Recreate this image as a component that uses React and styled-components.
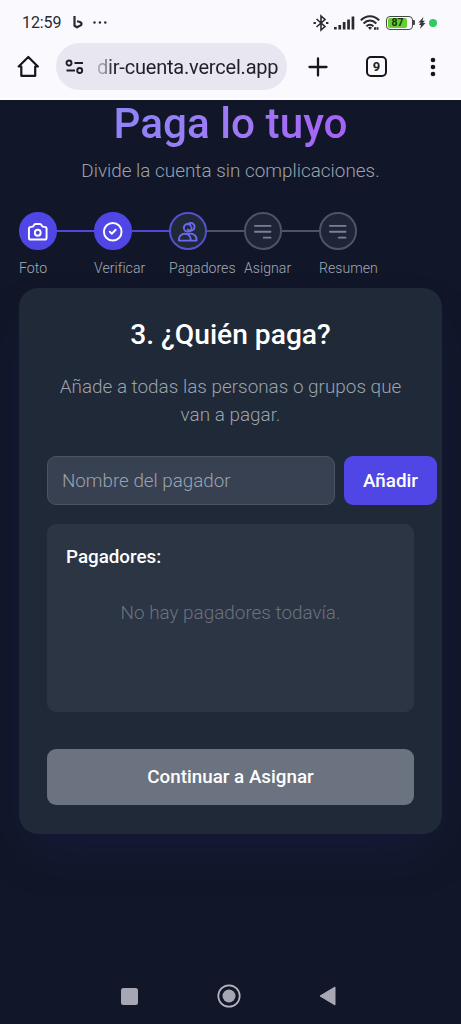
import React from "react";
import styled, { createGlobalStyle, css } from "styled-components";

const Global = createGlobalStyle`
  * { box-sizing: border-box; }
  body { margin: 0; background: #111827; font-family: Roboto, sans-serif; }
  h1, h2, h3, p { margin: 0; }
  button, input { font: inherit; }
  svg { display: block; flex: none; }
`;

const Screen = styled.div`
  width: 461px;
  height: 1024px;
  overflow: hidden;
  display: flex;
  flex-direction: column;
  background: #111728;
`;

const BrowserChrome = styled.header`
  flex: none;
  height: 100px;
  background: #faf9fe;
  border-bottom: 2px solid #fcfcfc;
  color: #1d1d22;
`;

const StatusBar = styled.div`
  height: 43px;
  padding: 2px 24px 0 22px;
  display: flex;
  align-items: center;
  justify-content: space-between;
`;

const StatusGroup = styled.div`
  display: flex;
  align-items: center;
`;

const Clock = styled.span`
  font-size: 16px;
  letter-spacing: -0.1px;
  margin-right: 12px;
  color: #2a2a2e;
`;

const Toolbar = styled.div`
  display: flex;
  align-items: center;
  height: 47px;
  padding-left: 17px;
`;

const AddressPill = styled.div`
  width: 231px;
  height: 47px;
  margin-left: 16px;
  padding-left: 9px;
  border-radius: 24px;
  background: #e8e6f1;
  display: flex;
  align-items: center;
`;

const Url = styled.span`
  margin-left: 12px;
  font-size: 20px;
  white-space: nowrap;
  letter-spacing: -0.2px;
  background: linear-gradient(90deg, #b5b4bd 0, #88878f 9px, #1f1f25 15px);
  background-clip: text;
  color: transparent;
`;

const PlusSlot = styled.div`
  margin-left: 21px;
`;

const TabCounter = styled.div`
  width: 21px;
  height: 21px;
  margin-left: 38px;
  border: 2.3px solid #17171b;
  border-radius: 5px;
  display: grid;
  place-items: center;
  font-size: 13px;
  font-weight: 700;
  line-height: 1;
`;

const MenuSlot = styled.div`
  margin-left: 43px;
`;

const Page = styled.main`
  flex: 1;
  padding: 0 19px;
  display: flex;
  flex-direction: column;
`;

const Title = styled.h1`
  align-self: center;
  font-size: 42.3px;
  font-weight: 500;
  line-height: 47px;
  white-space: nowrap;
  background: linear-gradient(90deg, #818cf8 -40%, #9f7af5 50%, #a855f7 125%);
  background-clip: text;
  color: transparent;
`;

const Subtitle = styled.p`
  margin-top: 10px;
  text-align: center;
  font-size: 18.9px;
  font-weight: 300;
  line-height: 28px;
  color: #9ca3af;
`;

const Stepper = styled.div`
  margin-top: 27.4px;
  display: flex;
`;

const Step = styled.div`
  width: 75px;
  flex: none;
`;

const StepTrack = styled.div`
  display: flex;
  align-items: center;
`;

const stepLooks = {
  done: css`background: #4f46e5; border-color: #4f46e5; color: #fff;`,
  current: css`background: #1f2937; border-color: #5650cf; color: #6d6af0;`,
  pending: css`background: #1f2539; border-color: #4e5366; color: #7b8193;`,
};

const StepCircle = styled.div`
  width: 37.6px;
  height: 37.6px;
  flex: none;
  border: 2px solid;
  border-radius: 50%;
  display: grid;
  place-items: center;
  ${(p) => stepLooks[p.$state]}

  svg { margin-top: 1px; }
`;

const StepLine = styled.div`
  flex: 1;
  height: 2px;
  background: ${(p) => (p.$done ? "#5148d8" : "#4e5366")};
`;

const StepLabel = styled.span`
  display: block;
  margin-top: 9px;
  font-size: 14.1px;
  font-weight: 300;
  line-height: 19px;
  letter-spacing: 0.03px;
  white-space: nowrap;
  color: #a3a9b5;
`;

const Card = styled.section`
  height: 546px;
  margin-top: 10px;
  padding: 28px;
  border-radius: 19px;
  background: #1f2937;
  box-shadow: 0 24px 50px -12px rgba(40, 34, 110, 0.28);
  display: flex;
  flex-direction: column;
`;

const CardTitle = styled.h2`
  text-align: center;
  font-size: 28.2px;
  font-weight: 500;
  line-height: 37px;
  color: #fff;
`;

const CardText = styled.p`
  margin: 19.6px -4px 0;
  text-align: center;
  font-size: 18.9px;
  font-weight: 300;
  line-height: 28px;
  color: #9ca3af;
`;

const AddRow = styled.div`
  margin-top: 27.4px;
  display: flex;
  gap: 9px;
`;

const NameInput = styled.input`
  width: 288px;
  height: 49px;
  flex: none;
  padding: 1px 14px 0;
  border: 1px solid #4b5563;
  border-radius: 9px;
  background: #374151;
  font-size: 18.8px;
  font-weight: 300;
  color: #fff;
  &::placeholder { color: #9ca3af; opacity: 1; }
`;

const AddButton = styled.button`
  width: 93px;
  height: 49px;
  flex: none;
  padding: 2px 0 0;
  border: 0;
  border-radius: 9px;
  background: #4f46e5;
  color: #fff;
  font-size: 18.8px;
  font-weight: 500;
`;

const PayersBox = styled.div`
  height: 188px;
  margin-top: 19px;
  padding: 19px;
  border-radius: 9px;
  background: #2b3544;
`;

const PayersTitle = styled.h3`
  font-size: 18.8px;
  font-weight: 500;
  line-height: 28px;
  color: #fff;
`;

const EmptyText = styled.p`
  margin-top: 28.4px;
  text-align: center;
  font-size: 18.9px;
  font-weight: 300;
  line-height: 28px;
  color: #6b7280;
`;

const ContinueButton = styled.button`
  height: 56px;
  margin-top: 37px;
  border: 0;
  border-radius: 9px;
  background: #6b7280;
  color: #fff;
  font-size: 18.8px;
  font-weight: 500;
`;

const NavBar = styled.nav`
  flex: none;
  height: 56px;
  padding: 0 125px 0 121px;
  display: flex;
  align-items: center;
  justify-content: space-between;
`;

const BluetoothIcon = () => (
  <svg width="16" height="18" viewBox="0 0 16 18" fill="none" stroke="#2a2a2e" strokeWidth="1.6">
    <path d="M3.500 5 12 12.500 8 16V2l4 3.500L3.500 13" />
    <path d="M.5 9h2.400M13 9h2.400" strokeWidth="2.200" />
  </svg>
);

const SignalIcon = () => (
  <svg width="21" height="14" viewBox="0 0 21 14" fill="#2a2a2e">
    <rect x="0" y="11" width="2.7" height="2.5" />
    <rect x="4.400" y="9" width="2.7" height="4.500" />
    <rect x="8.800" y="6" width="2.7" height="7.500" />
    <rect x="13.200" y="3.500" width="2.7" height="10" />
    <rect x="17.600" y="0.5" width="2.7" height="13" />
  </svg>
);

const WifiIcon = () => (
  <svg width="20" height="16" viewBox="0 0 20 16" fill="none" stroke="#2a2a2e" strokeWidth="2">
    <path d="M.8 5.400C6-.2 14-.2 19.200 5.400M3.600 8.500c3.700-3.900 9-3.900 12.700 0M6.400 11.400c2-2.100 5-2.100 7 0" />
    <path d="m8 12.400 2 2.600 2-2.600c-1.200-1-2.800-1-4 0Z" fill="#2a2a2e" stroke="none" />
    <path d="M14 13.500h4.500" strokeWidth="2.400" strokeDasharray="2 .5" />
  </svg>
);

const Battery = styled.div`
  width: 27px;
  height: 14px;
  padding: 1px;
  border: 1.5px solid #45454a;
  border-radius: 4px;
  display: flex;
`;

const BatteryLevel = styled.div`
  width: 19px;
  border-radius: 2px;
  background: #66cf32;
  color: #17330c;
  font-size: 10.5px;
  font-weight: 700;
  line-height: 10.5px;
  text-align: center;
`;

const BatteryTip = styled.div`
  width: 2px;
  height: 5px;
  border-radius: 0 1px 1px 0;
  background: #45454a;
`;

const RecordingDot = styled.div`
  width: 8px;
  height: 8px;
  border-radius: 50%;
  background: #2fca62;
  margin-left: 3px;
`;

const Gap = styled.span`
  width: ${(p) => p.$w}px;
`;

const CameraIcon = () => (
  <svg width="23.5" height="23.5" viewBox="0 0 24 24" fill="none" stroke="currentColor" strokeWidth="2" strokeLinecap="round" strokeLinejoin="round">
    <path d="M3 9a2 2 0 0 1 2-2h.93a2 2 0 0 0 1.664-.89l.812-1.220A2 2 0 0 1 10.070 4h3.860a2 2 0 0 1 1.664.89l.812 1.220A2 2 0 0 0 18.070 7H19a2 2 0 0 1 2 2v9a2 2 0 0 1-2 2H5a2 2 0 0 1-2-2V9Z" />
    <circle cx="12" cy="13" r="3" />
  </svg>
);

const CheckIcon = () => (
  <svg width="23.5" height="23.5" viewBox="0 0 24 24" fill="none" stroke="currentColor" strokeWidth="2" strokeLinecap="round" strokeLinejoin="round">
    <path d="m9 12 2 2 4-4m6 2a9 9 0 1 1-18 0 9 9 0 0 1 18 0Z" />
  </svg>
);

const PeopleIcon = () => (
  <svg width="23.5" height="23.5" viewBox="0 0 24 24" fill="none" stroke="currentColor" strokeWidth="1.900" strokeLinecap="round" strokeLinejoin="round">
    <path d="M12 4.354a4 4 0 1 1 0 5.292M15 21H3v-1a6 6 0 0 1 12 0v1Zm0 0h6v-1a6 6 0 0 0-9-5.197" />
    <path d="M16 8a4 4 0 1 1-4-4c2.200 0 3 1 3 2.500" />
  </svg>
);

const LinesIcon = () => (
  <svg width="23.5" height="23.5" viewBox="0 0 24 24" fill="none" stroke="currentColor" strokeWidth="1.800" strokeLinecap="round">
    <path d="M4 6h16M4 12h16m-7 6h7" />
  </svg>
);

const steps = [
  { label: "Foto", state: "done", Icon: CameraIcon },
  { label: "Verificar", state: "done", Icon: CheckIcon },
  { label: "Pagadores", state: "current", Icon: PeopleIcon },
  { label: "Asignar", state: "pending", Icon: LinesIcon },
  { label: "Resumen", state: "pending", Icon: LinesIcon },
];

export default function App() {
  return (
    <Screen>
      <Global />
      <BrowserChrome>
        <StatusBar>
          <StatusGroup>
            <Clock>12:59</Clock>
            <svg width="10" height="13" viewBox="0 0 10 13" fill="none" stroke="#2a2a2e" strokeWidth="2.200">
              <path d="M1.500 0v9.700L4 11.300l4.100-2.200c1-1.800-.2-3.200-1.800-3.300L4 5.200" strokeLinejoin="round" />
            </svg>
            <Gap $w={10} />
            <svg width="14" height="3" viewBox="0 0 14 3" fill="#2a2a2e">
              <circle cx="1.500" cy="1.500" r="1.200" />
              <circle cx="6.900" cy="1.500" r="1.200" />
              <circle cx="12.300" cy="1.500" r="1.200" />
            </svg>
          </StatusGroup>
          <StatusGroup>
            <BluetoothIcon />
            <Gap $w={5} />
            <SignalIcon />
            <Gap $w={5} />
            <WifiIcon />
            <Gap $w={6} />
            <Battery><BatteryLevel>87</BatteryLevel></Battery>
            <BatteryTip />
            <Gap $w={3} />
            <svg width="8" height="12" viewBox="0 0 8 12" fill="#37373b">
              <path d="M5.500 0 .5 5.500h2.300L1 8h2L2 12l5.500-6H5l2-2.200H4.500Z" />
            </svg>
            <RecordingDot />
          </StatusGroup>
        </StatusBar>
        <Toolbar>
          <svg width="23" height="23" viewBox="0 0 23 23" fill="none" stroke="#17171b" strokeWidth="2.200" strokeLinejoin="round" strokeLinecap="round">
            <path d="M1.700 11.500 11.300 2l9.600 9.500h-2.700v9.300H4.300v-9.300Z" />
          </svg>
          <AddressPill>
            <svg width="20" height="16" viewBox="0 0 20 16" fill="none" stroke="#1f1f25" strokeWidth="1.900">
              <circle cx="4" cy="4" r="2.500" />
              <path d="M9.500 4H18M1.500 11.500H10" />
              <circle cx="14.700" cy="11.500" r="2.500" />
            </svg>
            <Url>dir-cuenta.vercel.app</Url>
          </AddressPill>
          <PlusSlot>
            <svg width="20" height="20" viewBox="0 0 20 20" stroke="#17171b" strokeWidth="2.300" strokeLinecap="round">
              <path d="M10 1.500v17M1.500 10h17" />
            </svg>
          </PlusSlot>
          <TabCounter>9</TabCounter>
          <MenuSlot>
            <svg width="6" height="20" viewBox="0 0 6 20" fill="#17171b">
              <circle cx="3" cy="3" r="2.300" />
              <circle cx="3" cy="10" r="2.300" />
              <circle cx="3" cy="17" r="2.300" />
            </svg>
          </MenuSlot>
        </Toolbar>
      </BrowserChrome>

      <Page>
        <Title>Paga lo tuyo</Title>
        <Subtitle>Divide la cuenta sin complicaciones.</Subtitle>
        <Stepper>
          {steps.map(({ label, state, Icon }, i) => (
            <Step key={label}>
              <StepTrack>
                <StepCircle $state={state}><Icon /></StepCircle>
                {i < steps.length - 1 && <StepLine $done={state === "done"} />}
              </StepTrack>
              <StepLabel>{label}</StepLabel>
            </Step>
          ))}
        </Stepper>
        <Card>
          <CardTitle>3. ¿Quién paga?</CardTitle>
          <CardText>Añade a todas las personas o grupos que<br />van a pagar.</CardText>
          <AddRow>
            <NameInput placeholder="Nombre del pagador" />
            <AddButton>Añadir</AddButton>
          </AddRow>
          <PayersBox>
            <PayersTitle>Pagadores:</PayersTitle>
            <EmptyText>No hay pagadores todavía.</EmptyText>
          </PayersBox>
          <ContinueButton>Continuar a Asignar</ContinueButton>
        </Card>
      </Page>

      <NavBar>
        <svg width="17" height="17" viewBox="0 0 17 17"><rect width="17" height="17" rx="2.500" fill="#a6a7b3" /></svg>
        <svg width="24" height="24" viewBox="0 0 24 24" fill="none">
          <circle cx="12" cy="12" r="10.700" stroke="#b4b5c0" strokeWidth="1.700" />
          <circle cx="12" cy="12" r="6.500" fill="#a6a7b3" />
        </svg>
        <svg width="17" height="20" viewBox="0 0 17 20"><path d="M16 1v18L1 10Z" fill="#a6a7b3" stroke="#a6a7b3" strokeLinejoin="round" /></svg>
      </NavBar>
    </Screen>
  );
}
